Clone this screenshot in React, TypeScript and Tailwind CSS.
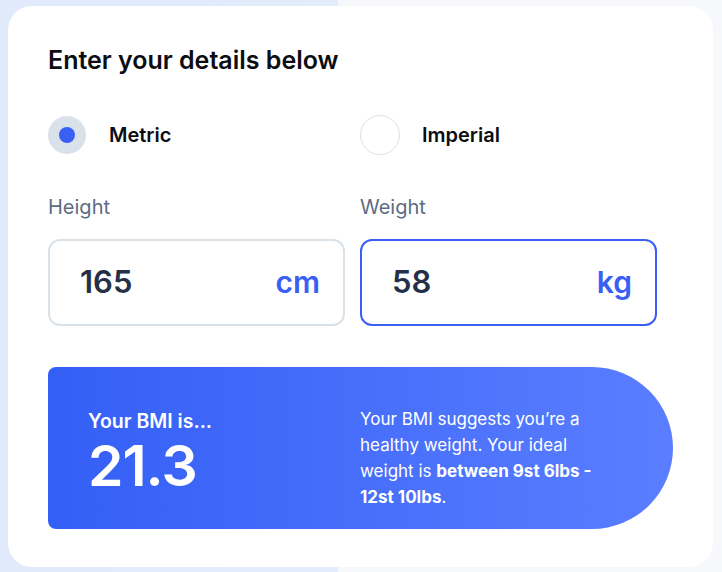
import React from "react";

export default function App() {
  return (
    <div
      className="w-[722px] h-[572px] overflow-hidden pt-[6px] pl-[8px] bg-[linear-gradient(to_right,#e0eafb_0px,#e3ecfb_338px,#f6f8fc_338px,#f6f8fc_722px)]"
      style={{ fontFamily: "Inter, 'Noto Sans', sans-serif" }}
    >
      <div className="w-[705px] h-[561px] bg-white rounded-[24px] pl-[40px] pt-[38px]">
        <h1 className="text-[25px] leading-[32px] font-semibold text-[#0b0d12]">
          Enter your details below
        </h1>

        <div className="grid grid-cols-[297px_297px] gap-x-[15px] mt-[39px]">
          <div className="flex items-center gap-[23px]">
            <div className="w-[38px] h-[38px] rounded-full bg-[#d9e2ea] flex items-center justify-center">
              <div className="w-[16px] h-[16px] rounded-full bg-[#3a5ff5]" />
            </div>
            <span className="text-[20px] font-semibold text-[#0b0d12]">Metric</span>
          </div>
          <div className="flex items-center gap-[22px]">
            <div className="w-[40px] h-[40px] rounded-full bg-white border border-[#d9e2ea]" />
            <span className="text-[20px] font-semibold text-[#0b0d12]">Imperial</span>
          </div>
        </div>

        <div className="grid grid-cols-[297px_297px] gap-x-[15px] mt-[38px]">
          <div>
            <div className="text-[20px] leading-[28px] text-[#5d6b82]">Height</div>
            <div className="mt-[18px] h-[87px] rounded-[12px] border-2 border-[#d9e2e8] flex items-center justify-between pl-[30px] pr-[23px]">
              <span className="text-[31px] font-semibold text-[#243047]">165</span>
              <span className="text-[30px] font-semibold text-[#3a5ff5]">cm</span>
            </div>
          </div>
          <div>
            <div className="text-[20px] leading-[28px] text-[#5d6b82]">Weight</div>
            <div className="mt-[18px] h-[87px] rounded-[12px] border-2 border-[#3a5ff5] flex items-center justify-between pl-[30px] pr-[23px]">
              <span className="text-[31px] font-semibold text-[#243047]">58</span>
              <span className="text-[30px] font-semibold text-[#3a5ff5]">kg</span>
            </div>
          </div>
        </div>

        <div className="mt-[41px] w-[625px] h-[162px] rounded-l-[8px] rounded-r-[81px] bg-[linear-gradient(to_right,#345ff6,#5a7eff)] flex items-start text-white">
          <div className="w-[312px] pl-[40px] pt-[42px]">
            <div className="text-[19.5px] leading-[24px] font-semibold">Your BMI is...</div>
            <div className="text-[57px] leading-[62px] font-semibold tracking-[-1px] mt-[2px]">21.3</div>
          </div>
          <div className="w-[250px] text-[17px] leading-[26px] pt-[39px]">
            Your BMI suggests you’re a healthy weight. Your ideal weight is{" "}
            <span className="font-bold">between 9st 6lbs - 12st 10lbs</span>.
          </div>
        </div>
      </div>
    </div>
  );
}
